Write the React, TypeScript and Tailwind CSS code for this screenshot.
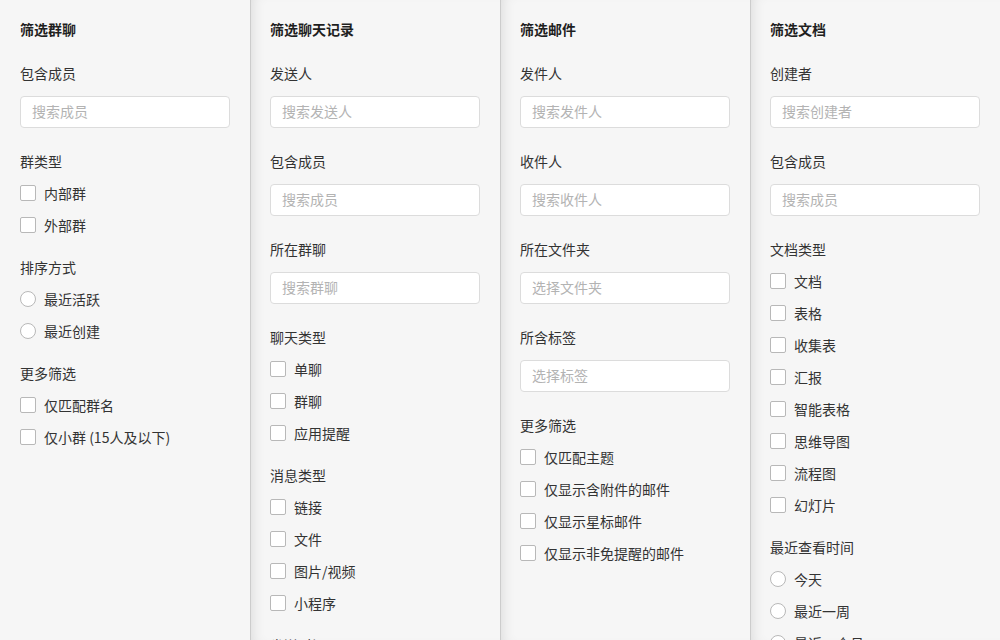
import React from "react";

type Sec =
  | { kind: "input"; label: string; placeholder: string }
  | { kind: "check"; label: string; items: string[] }
  | { kind: "radio"; label: string; items: string[] };

type Col = { title: string; sections: Sec[] };

const cols: Col[] = [
  {
    title: "筛选群聊",
    sections: [
      { kind: "input", label: "包含成员", placeholder: "搜索成员" },
      { kind: "check", label: "群类型", items: ["内部群", "外部群"] },
      { kind: "radio", label: "排序方式", items: ["最近活跃", "最近创建"] },
      { kind: "check", label: "更多筛选", items: ["仅匹配群名", "仅小群 (15人及以下)"] },
    ],
  },
  {
    title: "筛选聊天记录",
    sections: [
      { kind: "input", label: "发送人", placeholder: "搜索发送人" },
      { kind: "input", label: "包含成员", placeholder: "搜索成员" },
      { kind: "input", label: "所在群聊", placeholder: "搜索群聊" },
      { kind: "check", label: "聊天类型", items: ["单聊", "群聊", "应用提醒"] },
      { kind: "check", label: "消息类型", items: ["链接", "文件", "图片/视频", "小程序"] },
      { kind: "radio", label: "发送时间", items: ["今天", "最近一周"] },
    ],
  },
  {
    title: "筛选邮件",
    sections: [
      { kind: "input", label: "发件人", placeholder: "搜索发件人" },
      { kind: "input", label: "收件人", placeholder: "搜索收件人" },
      { kind: "input", label: "所在文件夹", placeholder: "选择文件夹" },
      { kind: "input", label: "所含标签", placeholder: "选择标签" },
      {
        kind: "check",
        label: "更多筛选",
        items: ["仅匹配主题", "仅显示含附件的邮件", "仅显示星标邮件", "仅显示非免提醒的邮件"],
      },
    ],
  },
  {
    title: "筛选文档",
    sections: [
      { kind: "input", label: "创建者", placeholder: "搜索创建者" },
      { kind: "input", label: "包含成员", placeholder: "搜索成员" },
      {
        kind: "check",
        label: "文档类型",
        items: ["文档", "表格", "收集表", "汇报", "智能表格", "思维导图", "流程图", "幻灯片"],
      },
      { kind: "radio", label: "最近查看时间", items: ["今天", "最近一周", "最近一个月"] },
    ],
  },
];

function Column({ col, first }: { col: Col; first: boolean }) {
  return (
    <div
      className={
        "w-[250px] h-[640px] shrink-0 overflow-hidden bg-[#f6f6f6] px-5 pt-[19px] " +
        (first
          ? ""
          : "shadow-[inset_1px_0_0_#cccccc,inset_12px_0_14px_-10px_rgba(0,0,0,0.12)]")
      }
    >
      <div className="h-5 leading-5 text-[14px] font-semibold text-[#1f1f1f]">{col.title}</div>
      {col.sections.map((s, i) => {
        const prev = i === 0 ? null : col.sections[i - 1];
        const mt = prev === null ? "mt-6" : prev.kind === "input" ? "mt-[23px]" : "mt-[22px]";
        return (
          <div key={i} className={mt}>
            <div className="h-5 leading-5 text-[14px] text-[#333]">{s.label}</div>
            {s.kind === "input" ? (
              <div className="mt-[13px] h-8 w-[210px] rounded-[4px] border border-[#dcdcdc] bg-white pl-[11px] pr-3 pb-0.5 flex items-center text-[14px] text-[#b3b3b3]">
                {s.placeholder}
              </div>
            ) : (
              s.items.map((it, j) => (
                <div key={j} className="mt-3 h-5 flex items-center gap-2 text-[14px] text-[#333]">
                  <span
                    className={
                      "w-4 h-4 shrink-0 border border-[#b8b8b8] bg-white " +
                      (s.kind === "radio" ? "rounded-full" : "rounded-[2px]")
                    }
                  />
                  <span className="leading-5">{it}</span>
                </div>
              ))
            )}
          </div>
        );
      })}
    </div>
  );
}

export default function App() {
  return (
    <div
      className="w-[1000px] h-[640px] overflow-hidden flex bg-[#f6f6f6]"
      style={{ fontFamily: '"Noto Sans CJK SC", "Noto Sans", sans-serif' }}
    >
      {cols.map((c, i) => (
        <Column key={i} col={c} first={i === 0} />
      ))}
    </div>
  );
}
